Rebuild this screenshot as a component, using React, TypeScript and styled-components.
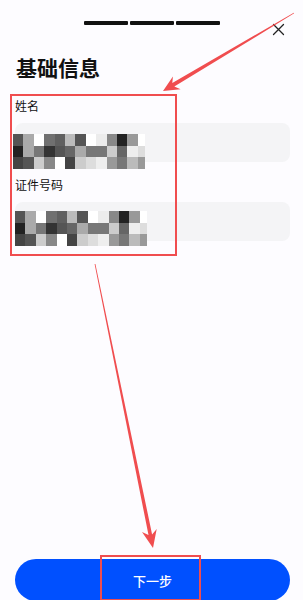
import React from "react";
import styled, { createGlobalStyle } from "styled-components";

const Global = createGlobalStyle`
  html, body { margin: 0; padding: 0; background: #fdfcff; }
  body { font-family: "Noto Sans CJK SC", "Noto Sans", sans-serif; }
  * { box-sizing: border-box; }
`;

const Page = styled.div`
  position: relative;
  width: 303px;
  height: 600px;
  overflow: hidden;
  display: flex;
  flex-direction: column;
  padding: 0 13px 0 15px;
  background: #fdfcff;
`;

const Header = styled.div`
  position: relative;
  height: 46px;
  display: flex;
  align-items: center;
  justify-content: center;
`;

const Steps = styled.div`
  display: flex;
  gap: 2px;
  margin-left: -1px;
`;

const Dash = styled.div`
  width: 44px;
  height: 4px;
  border-radius: 1px;
  background: #111;
`;

const Close = styled.div`
  position: absolute;
  right: 5px;
  top: 17px;
  width: 13px;
  height: 13px;
`;

const Title = styled.h1`
  margin: 6px 0 0 1px;
  font-size: 21px;
  line-height: 30px;
  font-weight: 700;
  color: #111;
`;

const Form = styled.div`
  display: flex;
  flex-direction: column;
  margin-top: 15px;
`;

const Label = styled.div`
  font-size: 12px;
  line-height: 18px;
  color: #111;
  margin-bottom: 8px;
`;

const Field = styled.div<{ $gap: number }>`
  position: relative;
  height: 39px;
  border-radius: 8px;
  background: #f4f4f6;
  margin-bottom: ${(p) => p.$gap}px;
`;

const Mosaic = styled.div<{ $left: number; $top: number }>`
  position: absolute;
  left: ${(p) => p.$left}px;
  top: ${(p) => p.$top}px;
  display: grid;
  grid-template-columns: repeat(12, 10.4px) 7px;
  grid-auto-rows: 11.5px;
`;

const Cell = styled.div<{ $c: string }>`
  background: ${(p) => p.$c};
`;

const Spacer = styled.div`
  flex: 1;
`;

const Button = styled.button`
  height: 42px;
  margin-bottom: -1px;
  border: none;
  border-radius: 21px;
  background: #0050ff;
  color: #fff;
  font-family: "Noto Sans CJK SC", sans-serif;
  font-size: 13px;
  font-weight: 500;
  display: flex;
  align-items: center;
  justify-content: center;
  padding: 0;
`;

const Highlight = styled.div<{ $l: number; $t: number; $w: number; $h: number }>`
  position: absolute;
  left: ${(p) => p.$l}px;
  top: ${(p) => p.$t}px;
  width: ${(p) => p.$w}px;
  height: ${(p) => p.$h}px;
  border: 2.5px solid #f04d4f;
  pointer-events: none;
`;

const Overlay = styled.svg`
  position: absolute;
  left: 0;
  top: 0;
  pointer-events: none;
`;

const rows = [
  ["#555", "#aaa", "#fff", "#707070", "#606060", "#bbb", "#555", "#fff", "#ececec", "#888", "#222", "#999", "#fff"],
  ["#222", "#aaa", "#777", "#333", "#555", "#666", "#aaa", "#777", "#777", "#ccc", "#666", "#eee", "#ddd"],
  ["#444", "#555", "#ccc", "#888", "#fff", "#444", "#ccc", "#ddd", "#eee", "#999", "#777", "#bbb", "#999"],
];

function Pixels({ left, top }: { left: number; top: number }) {
  return (
    <Mosaic $left={left} $top={top}>
      {rows.flat().map((c, i) => (
        <Cell key={i} $c={c} />
      ))}
    </Mosaic>
  );
}

function arrow(sx: number, sy: number, tx: number, ty: number, hl: number, hw: number, w0: number, w1: number) {
  const dx = tx - sx;
  const dy = ty - sy;
  const len = Math.hypot(dx, dy);
  const ux = dx / len;
  const uy = dy / len;
  const nx = -uy;
  const ny = ux;
  const bx = tx - ux * hl;
  const by = ty - uy * hl;
  const nb = hl * 0.25;
  const cx = tx - ux * (hl - nb);
  const cy = ty - uy * (hl - nb);
  const pts = [
    [sx + nx * w0, sy + ny * w0],
    [cx + nx * w1, cy + ny * w1],
    [bx + nx * hw, by + ny * hw],
    [tx, ty],
    [bx - nx * hw, by - ny * hw],
    [cx - nx * w1, cy - ny * w1],
    [sx - nx * w0, sy - ny * w0],
  ];
  return pts.map((p) => p.map((v) => v.toFixed(1)).join(",")).join(" ");
}

export default function App() {
  return (
    <>
      <Global />
      <Page>
        <Header>
          <Steps>
            <Dash />
            <Dash />
            <Dash />
          </Steps>
          <Close>
            <svg width="13" height="13" viewBox="0 0 13 13">
              <path d="M1.5 1.5 L11.5 11.5 M11.5 1.5 L1.5 11.5" stroke="#222" strokeWidth="1.3" strokeLinecap="round" />
            </svg>
          </Close>
        </Header>
        <Title>基础信息</Title>
        <Form>
          <Label>姓名</Label>
          <Field $gap={14}>
            <Pixels left={-2} top={11} />
          </Field>
          <Label>证件号码</Label>
          <Field $gap={0}>
            <Pixels left={0} top={9} />
          </Field>
        </Form>
        <Spacer />
        <Button>下一步</Button>
        <Highlight $l={10} $t={94} $w={167} $h={162} />
        <Highlight $l={100} $t={555} $w={101} $h={46} />
        <Overlay width="303" height="600" viewBox="0 0 303 600">
          <polygon points={arrow(294, 13, 163, 91, 16, 7.5, 0.4, 2)} fill="#f04d4f" />
          <polygon points={arrow(95, 264, 153, 548, 18, 7.5, 0.4, 1.8)} fill="#f04d4f" />
        </Overlay>
      </Page>
    </>
  );
}
